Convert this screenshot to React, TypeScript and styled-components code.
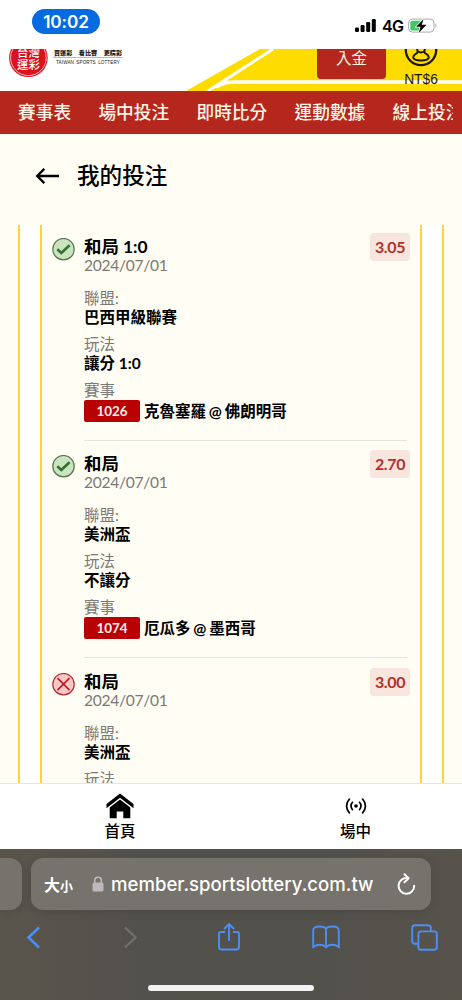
import styled, { createGlobalStyle, css } from "styled-components";

const GlobalStyle = createGlobalStyle`
  :root {
    --color-red: #b5261c;
    --color-yellow: #ffdc00;
    --color-cream: #fffdf4;
    --color-line: #fdd23c;
    --color-muted: #7b7975;
    --color-ios-blue: #4b8ef5;
    --font-page: Lato, "Noto Sans CJK TC", sans-serif;
    --font-system: Inter, "Noto Sans CJK TC", sans-serif;
  }

  * {
    box-sizing: border-box;
  }

  body {
    margin: 0;
    font-family: var(--font-page);
  }
`;

type TBet = {
  id: string;
  pick: string;
  date: string;
  odds: string;
  won: boolean;
  league: string;
  market?: string;
  code?: string;
  match?: string;
};

const bets: TBet[] = [
  {
    id: "a",
    pick: "和局 1:0",
    date: "2024/07/01",
    odds: "3.05",
    won: true,
    league: "巴西甲級聯賽",
    market: "讓分 1:0",
    code: "1026",
    match: "克魯塞羅 @ 佛朗明哥",
  },
  {
    id: "b",
    pick: "和局",
    date: "2024/07/01",
    odds: "2.70",
    won: true,
    league: "美洲盃",
    market: "不讓分",
    code: "1074",
    match: "厄瓜多 @ 墨西哥",
  },
  {
    id: "c",
    pick: "和局",
    date: "2024/07/01",
    odds: "3.00",
    won: false,
    league: "美洲盃",
  },
];

const navItems = ["賽事表", "場中投注", "即時比分", "運動數據", "線上投注"];

const SRoot = styled.div`
  width: 462px;
  height: 1000px;
  display: flex;
  flex-direction: column;
  overflow: hidden;
  background-color: #fff;
`;

/* Status bar */

const SStatusBar = styled.div`
  height: 49px;
  flex: none;
  display: flex;
  align-items: flex-start;
  justify-content: space-between;
  padding: 9px 25px 0 32px;
  font-family: var(--font-system);
`;

const STime = styled.div`
  width: 68px;
  height: 25px;
  border-radius: 13px;
  background-color: #076be0;
  color: #fff;
  font-size: 17.2px;
  font-weight: 600;
  letter-spacing: -0.1px;
  line-height: 25px;
  text-align: center;
`;

const SStatusIcons = styled.div`
  display: flex;
  align-items: center;
  height: 33px;
  font-size: 16px;
  font-weight: 600;

  span {
    margin: 0 6px;
    width: 20px;
    letter-spacing: -0.6px;
  }
`;

/* Site header */

const SHeader = styled.header`
  height: 42px;
  flex: none;
  display: grid;
  overflow: hidden;

  > * {
    grid-area: 1 / 1;
  }
`;

const SHeaderContent = styled.div`
  display: flex;
  height: 42px;
  align-items: flex-start;
  z-index: 1;
`;

const SSlogan = styled.div`
  width: 70px;
  margin-left: 4px;
  text-align: center;
  white-space: nowrap;
  color: #222;
`;

const SSloganTop = styled.div`
  display: flex;
  justify-content: space-between;
  padding: 0 1px;
  height: 9px;
  border-bottom: 1px solid #bbb;
  font-size: 6.1px;
  font-weight: 900;
  line-height: 7px;
`;

const SSloganBottom = styled.div`
  font-family: "Liberation Sans", sans-serif;
  font-size: 4.6px;
  letter-spacing: 0.1px;
  word-spacing: 1px;
  line-height: 9px;
`;

const SDeposit = styled.div`
  width: 69px;
  height: 30px;
  margin-left: 194px;
  border-radius: 0 0 4px 4px;
  background-color: var(--color-red);
  color: #fff3e2;
  font-size: 15.5px;
  line-height: 19px;
  text-align: center;
`;

const SAccount = styled.div`
  width: 40px;
  margin-left: 15px;
  display: flex;
  flex-direction: column;
  align-items: center;
  font-family: "Liberation Sans", sans-serif;
  font-size: 13.8px;
  line-height: 14px;
  color: #1c1808;

  svg {
    flex: none;
    margin-bottom: 6px;
  }
`;

const SNav = styled.nav`
  height: 43px;
  flex: none;
  display: flex;
  gap: 27.3px;
  padding-left: 18px;
  border-right: 9px solid var(--color-red);
  background-color: var(--color-red);
  color: #fff4e6;
  font-size: 17.7px;
  font-weight: 500;
  line-height: 43px;
  white-space: nowrap;
  overflow: hidden;
`;

/* Bets */

const SContent = styled.main`
  height: 649px;
  flex: none;
  overflow: hidden;
  background-color: var(--color-cream);
`;

const STitleRow = styled.div`
  height: 91px;
  display: flex;
  align-items: flex-start;
  gap: 17px;
  padding: 25px 0 0 35px;

  h1 {
    margin: 0;
    font-size: 22.6px;
    font-weight: 500;
    line-height: 33px;
  }

  svg {
    margin-top: 8px;
  }
`;

const SOuterFrame = styled.div`
  margin: 0 18px;
  padding: 0 20px;
  border: 2px solid var(--color-line);
  border-width: 0 2px;
  background-color: #fff;
`;

const SInnerFrame = styled.div`
  border: 2px solid var(--color-line);
  border-width: 0 2px;
  padding: 0 10px;
  height: 558px;
  background-color: var(--color-cream);
`;

const SBet = styled.article`
  display: grid;
  grid-template-columns: 32px 1fr;
  height: 217.4px;
  padding-top: 11px;
`;

const SBetIcon = styled.div`
  padding-top: 2px;
`;

const SBetBody = styled.div`
  height: 205px;
  margin-right: 3px;
  border-bottom: 1px solid #e6e4dc;
`;

const SBetHead = styled.div`
  display: flex;
  justify-content: space-between;
  align-items: flex-start;
  height: 53px;
  margin-right: -3px;
`;

const SPick = styled.div`
  padding-top: 1px;
  font-size: 17.4px;
  font-weight: 700;
  line-height: 20px;
`;

const SDate = styled.div`
  font-size: 15.6px;
  line-height: 17px;
  letter-spacing: -0.3px;
  color: var(--color-muted);
`;

const SOdds = styled.div`
  width: 40px;
  height: 28px;
  margin-top: -3px;
  border-radius: 4px;
  background-color: #f8e5de;
  color: #b3302a;
  font-size: 16px;
  font-weight: 700;
  letter-spacing: -0.4px;
  line-height: 28px;
  text-align: center;
`;

const SLabel = styled.div`
  font-size: 15.5px;
  line-height: 19px;
  color: var(--color-muted);
`;

const SValue = styled.div`
  font-size: 15.5px;
  font-weight: 700;
  line-height: 19px;
  margin-bottom: 8px;
`;

const SMatch = styled.div`
  display: flex;
  align-items: center;
  gap: 4px;
  font-size: 15.5px;
  font-weight: 700;
  line-height: 22px;
  word-spacing: -0.9px;
  white-space: nowrap;
`;

const SCode = styled.span`
  width: 56px;
  height: 22px;
  border-radius: 2px;
  background-color: #b90005;
  color: #fff0e6;
  font-size: 13.4px;
  text-align: center;
`;

/* Bottom tabs */

const STabs = styled.nav`
  height: 66px;
  flex: none;
  display: grid;
  grid-template-columns: 240px 231px;
  border-top: 1px solid #e5e5e5;
  background-color: #fff;
`;

const STab = styled.div`
  display: flex;
  flex-direction: column;
  align-items: center;
  padding-top: 8px;
  font-size: 15.5px;
  font-weight: 500;
  line-height: 22px;

  svg {
    height: 28px;
  }
`;

/* Browser chrome */

const SBrowser = styled.footer`
  height: 151px;
  flex: none;
  background: linear-gradient(90deg, #5a554b, #53514d 30%, #53514c 70%, #57534b);
`;

const SAddressRow = styled.div`
  display: flex;
  gap: 9px;
  padding-top: 9px;
`;

const glass = css`
  height: 52px;
  background-color: #76726c;
  box-shadow: 0 2px 8px rgba(0, 0, 0, 0.12);
`;

const SPreviousPage = styled.div`
  ${glass}
  width: 22px;
  border-radius: 0 12px 12px 0;
`;

const SAddress = styled.div`
  ${glass}
  width: 400px;
  border-radius: 12px;
  display: flex;
  align-items: center;
  padding: 0 15px 0 13px;
  font-family: var(--font-system);
  color: #fff;
`;

const STextSize = styled.span`
  width: 48px;
  font-size: 16px;
  font-weight: 700;
  white-space: nowrap;

  small {
    font-size: 13px;
  }
`;

const SHost = styled.span`
  flex: 1;
  margin-left: 7px;
  font-size: 18.6px;
  font-weight: 500;
  white-space: nowrap;
`;

const SToolbar = styled.div`
  display: flex;
  align-items: center;
  justify-content: space-between;
  height: 54px;
  padding: 0 24px 0 19px;
  color: var(--color-ios-blue);
`;

const SToolbarButton = styled.div`
  width: 28px;
  display: flex;
  justify-content: center;
`;

const SHomeIndicator = styled.div`
  width: 166px;
  height: 6px;
  margin: 21px auto 0;
  border-radius: 3px;
  background-color: #f3f1f2;
`;

function StatusIcon({ won }: { won: boolean }) {
  return (
    <svg width="23" height="24" viewBox="0 0 23 24" fill="none">
      <circle
        cx="11.5"
        cy="11.2"
        r="10.7"
        fill={won ? "#c9e4bf" : "#fbc9c4"}
        stroke={won ? "#55774e" : "#b52a35"}
        strokeWidth="1.2"
      />
      {won ? (
        <path d="M5.3 11.2 9.3 14.9 17.6 7.2" stroke="#327332" strokeWidth="2.6" />
      ) : (
        <path
          d="m5.5 5.2 12 12M17.5 5.2l-12 12"
          stroke="#b91f2e"
          strokeWidth="1.8"
        />
      )}
    </svg>
  );
}

function Logo() {
  return (
    <svg width="49" height="42" viewBox="0 0 49 42">
      <circle cx="28.4" cy="8.8" r="19.3" fill="#dc101f" />
      <circle cx="28.4" cy="8.8" r="17.8" fill="none" stroke="#fff" strokeWidth="0.7" />
      <g
        fill="#fff"
        fontFamily="'Noto Sans CJK TC', sans-serif"
        fontSize="11.4"
        fontWeight="500"
        textAnchor="middle"
      >
        <text x="28.4" y="7.8">台灣</text>
        <text x="28.4" y="19.5">運彩</text>
      </g>
    </svg>
  );
}

function Banner() {
  return (
    <svg width="462" height="42" viewBox="0 0 462 42">
      <path d="M186 42 260 0H462V42Z" fill="#ffdc00" />
      <path d="M208 42 273 0" stroke="#fff" strokeWidth="3" />
      <path d="M216 38C224 33 228 33 236 33H462" fill="none" stroke="#fff" strokeWidth="3.6" />
    </svg>
  );
}

function BetItem({ bet }: { bet: TBet }) {
  return (
    <SBet>
      <SBetIcon>
        <StatusIcon won={bet.won} />
      </SBetIcon>
      <SBetBody>
        <SBetHead>
          <div>
            <SPick>{bet.pick}</SPick>
            <SDate>{bet.date}</SDate>
          </div>
          <SOdds>{bet.odds}</SOdds>
        </SBetHead>
        <SLabel>聯盟:</SLabel>
        <SValue>{bet.league}</SValue>
        <SLabel>玩法</SLabel>
        {bet.market && <SValue>{bet.market}</SValue>}
        {bet.match && (
          <>
            <SLabel>賽事</SLabel>
            <SMatch>
              <SCode>{bet.code}</SCode>
              {bet.match}
            </SMatch>
          </>
        )}
      </SBetBody>
    </SBet>
  );
}

export default function App() {
  return (
    <SRoot>
      <GlobalStyle />
      <SStatusBar>
        <STime>10:02</STime>
        <SStatusIcons>
          <svg width="21" height="13" viewBox="0 0 21 13">
            <rect x="0" y="8.5" width="4" height="4.5" rx="1.2" />
            <rect x="5.6" y="6" width="4" height="7" rx="1.2" />
            <rect x="11.2" y="3" width="4" height="10" rx="1.2" />
            <rect x="16.8" y="0" width="4" height="13" rx="1.2" />
          </svg>
          <span>4G</span>
          <svg width="29" height="16" viewBox="0 0 29 16">
            <rect x="0.6" y="1.1" width="25.4" height="13" rx="3.8" fill="#fff" stroke="#aaa" />
            <path d="M4.2 2.8H13V12.5H4.2Q2.3 12.5 2.3 10.5V4.8Q2.3 2.8 4.2 2.8Z" fill="#45c769" />
            <path d="M27.4 5.5Q29.6 7.7 27.4 9.8Z" fill="#aaa" />
            <path
              d="M15.5 1 8.2 8.7H12.5L10.7 15 18.5 6.7H13.8Z"
              stroke="#fff"
              strokeWidth="1.4"
              paintOrder="stroke"
            />
          </svg>
        </SStatusIcons>
      </SStatusBar>

      <SHeader>
        <Banner />
        <SHeaderContent>
          <Logo />
          <SSlogan>
            <SSloganTop>
              <span>買運彩</span>
              <span>看比賽</span>
              <span>更精彩</span>
            </SSloganTop>
            <SSloganBottom>TAIWAN SPORTS LOTTERY</SSloganBottom>
          </SSlogan>
          <SDeposit>入金</SDeposit>
          <SAccount>
            <svg width="34" height="18" viewBox="0 0 34 18" fill="none" stroke="#1c1808">
              <circle cx="17" cy="1" r="15.2" strokeWidth="2.3" />
              <path
                d="M13 -2C12.8 1 14.5 2.5 13 4C11 5.6 8.8 6.4 9.3 8.8C10 11.6 14 11.5 17 11.5S24 11.6 24.7 8.8C25.2 6.4 23 5.6 21 4C19.5 2.5 21.2 1 21 -2M13.6 2.2Q17 4.6 20.4 2.2"
                strokeWidth="2"
              />
            </svg>
            NT$6
          </SAccount>
        </SHeaderContent>
      </SHeader>

      <SNav>
        {navItems.map((item) => (
          <span key={item}>{item}</span>
        ))}
      </SNav>

      <SContent>
        <STitleRow>
          <svg width="25" height="18" viewBox="0 0 25 18" fill="none" stroke="#000" strokeWidth="2.3">
            <path d="M24 9H2.5M9.3 1.9 2.2 9 9.3 16.1" />
          </svg>
          <h1>我的投注</h1>
        </STitleRow>
        <SOuterFrame>
          <SInnerFrame>
            {bets.map((bet) => (
              <BetItem key={bet.id} bet={bet} />
            ))}
          </SInnerFrame>
        </SOuterFrame>
      </SContent>

      <STabs>
        <STab>
          <svg width="28" height="28" viewBox="0 0 28 28">
            <path d="M14 1.5 27.5 12V16.2L14 5.8.5 16.2V12Z" />
            <path d="M14 7.5 24.3 15.5V26.3H17.3V19.5H10.7V26.3H3.7V15.5Z" />
          </svg>
          首頁
        </STab>
        <STab>
          <svg width="22" height="28" viewBox="0 0 22 28" fill="none" stroke="#000" strokeWidth="1.7">
            <circle cx="11" cy="14" r="1.8" fill="#000" stroke="none" />
            <path d="M7.8 9.8Q4.2 14 7.8 18.2M14.2 9.8Q17.8 14 14.2 18.2M4.7 6.5Q-1.6 14 4.7 21.5M17.3 6.5Q23.6 14 17.3 21.5" />
          </svg>
          場中
        </STab>
      </STabs>

      <SBrowser>
        <SAddressRow>
          <SPreviousPage />
          <SAddress>
            <STextSize>
              大<small>小</small>
            </STextSize>
            <svg width="12" height="16" viewBox="0 0 12 16" fill="none">
              <rect x="0.5" y="6.6" width="11" height="9" rx="1.6" fill="#bcb9bc" />
              <path d="M2.7 7.5V4.5Q2.7 1.2 6 1.2T9.3 4.5V7.5" stroke="#bcb9bc" strokeWidth="1.6" />
            </svg>
            <SHost>member.sportslottery.com.tw</SHost>
            <svg width="19" height="23" viewBox="0 0 19 23" fill="none" stroke="#fff" strokeWidth="2">
              <path
                d="M10.5 5.2A7.8 7.8 0 1 0 17.2 12.8M7.5 1.3 11.6 5.2 7.5 9.3"
                strokeLinecap="round"
                strokeLinejoin="round"
              />
            </svg>
          </SAddress>
        </SAddressRow>
        <SToolbar>
          <SToolbarButton>
            <svg width="15" height="23" viewBox="0 0 15 23" fill="none" stroke="currentColor" strokeWidth="2.6">
              <path d="M13 1.5 2.5 11.5 13 21.5" />
            </svg>
          </SToolbarButton>
          <SToolbarButton>
            <svg width="15" height="23" viewBox="0 0 15 23" fill="none" stroke="#716f6b" strokeWidth="2.4">
              <path d="M2 1.5 12.5 11.5 2 21.5" />
            </svg>
          </SToolbarButton>
          <SToolbarButton>
            <svg width="24" height="30" viewBox="0 0 24 30" fill="none" stroke="currentColor" strokeWidth="1.9">
              <path d="M8 10H4Q2 10 2 12V25Q2 27.5 4.5 27.5H19.5Q22 27.5 22 25V12Q22 10 20 10H16M12 19V2M7 7 12 2 17 7" />
            </svg>
          </SToolbarButton>
          <SToolbarButton>
            <svg width="28" height="24" viewBox="0 0 28 24" fill="none" stroke="currentColor" strokeWidth="1.9">
              <path d="M14 4V22Q8 17.5 1.2 22V5.5Q1.2 1.5 7.5 1.5T14 4.5Q14.3 1.5 20.5 1.5T26.8 5.5V22Q20 17.5 14 22" />
            </svg>
          </SToolbarButton>
          <SToolbarButton>
            <svg width="27" height="27" viewBox="0 0 27 27" fill="none" stroke="currentColor" strokeWidth="1.9">
              <rect x="7.4" y="7.4" width="18.4" height="18.4" rx="2.6" />
              <path d="M7.4 19.8H4Q1.2 19.8 1.2 17V4Q1.2 1.2 4 1.2H17Q19.8 1.2 19.8 4V7.4" />
            </svg>
          </SToolbarButton>
        </SToolbar>
        <SHomeIndicator />
      </SBrowser>
    </SRoot>
  );
}
